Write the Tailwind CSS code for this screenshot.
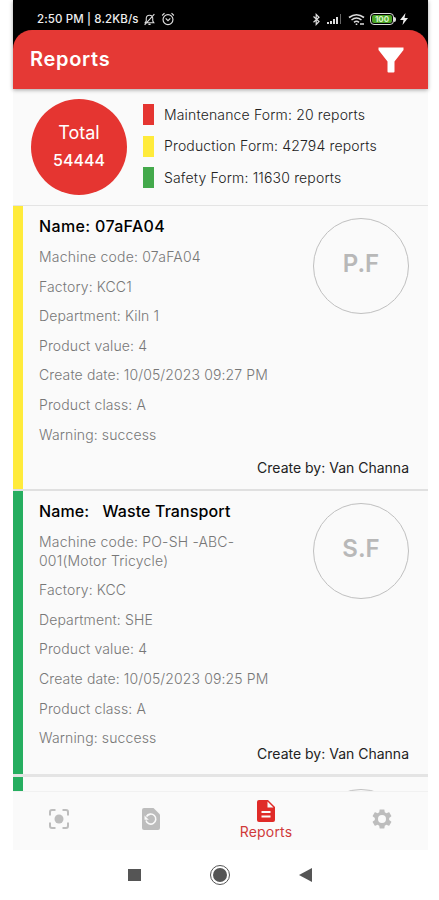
<!DOCTYPE html>
<html lang="en">
<head>
<meta charset="utf-8">
<title>Reports</title>
<script src="https://cdn.jsdelivr.net/npm/@tailwindcss/browser@4"></script>
</head>
<body class="bg-white font-['Inter','Liberation_Sans',sans-serif] w-[439px] h-[900px] overflow-hidden">
<div class="ml-[13px] w-[415px] h-[900px] flex flex-col">
  <!-- Status bar and app bar -->
  <div class="bg-black shrink-0 relative z-10 shadow-[0_1px_4px_rgba(0,0,0,0.35)]">
    <div class="h-[30px] pt-[8px] pl-[24px] pr-[20px] flex items-center justify-between text-white">
      <div class="flex items-center gap-[5px]">
        <span class="text-[11.5px] leading-[18px] font-medium tracking-[0.12px] whitespace-nowrap w-[101px] text-[#eee]">2:50 PM | 8.2KB/s</span>
        <svg class="w-[13px] h-[13px]" viewBox="0 0 24 24" fill="none" stroke="#ddd" stroke-width="2"><path d="M4 18h16l-2-3V10c0-4-2-6-6-6s-6 2-6 6v5zM10 21h4M3 22L21 2"/></svg>
        <svg class="w-[14px] h-[14px]" viewBox="0 0 24 24" fill="none" stroke="#ddd" stroke-width="2"><circle cx="12" cy="13" r="8.5"/><path d="M8 11l4 4 4-4M2 6l4-4M22 6l-4-4"/></svg>
      </div>
      <div class="flex items-center">
        <svg class="w-[9px] h-[13px] mr-[5px]" viewBox="0 0 9 13" fill="none" stroke="#ddd" stroke-width="1.2"><path d="M1.5 3.5l5.5 5-2.8 3V1.5L7 4.3l-5.5 5"/></svg>
        <svg class="w-[16px] h-[12px] mr-[6px]" viewBox="0 0 16 12" fill="#ddd"><path d="M1 9h2v2H1zM4 8h2v3H4zM7 6h2v5H7zM10 4h2v7h-2z"/><path d="M14 1h1v10h-1z" fill="#666"/></svg>
        <svg class="w-[17px] h-[13px] mr-[5px]" viewBox="0 0 17 13" fill="none" stroke="#ddd" stroke-width="1.6"><path d="M1 4.5Q8.500-1 16 4.500M3.500 7Q8.500 3 13.500 7M6 9.300q2.500-2 5 0"/><path d="M8.500 10.500v1.500M12 11h4"/></svg>
        <div class="w-[24px] h-[12px] rounded-[4px] border border-[#ddd] p-px"><div class="h-full rounded-[2px] bg-[#4ba526] text-[8px] leading-[8px] font-bold text-center text-[#d9f5c8]">100</div></div>
        <div class="w-[2px] h-[5px] bg-[#ddd] rounded-r-sm"></div>
        <svg class="w-[8px] h-[12px] ml-[4px]" viewBox="0 0 8 12" fill="#eee"><path d="M5.500 0L0 7h3.500L2.500 12 8 5H4.500z"/></svg>
      </div>
    </div>
    <div class="h-[59px] bg-[#e53935] rounded-t-[19px] flex items-center justify-between pl-[17px] pr-[24px]">
      <h1 class="text-white text-[20px] leading-[24px] font-semibold tracking-[0.7px] pb-px">Reports</h1>
      <svg class="w-[26px] h-[26px]" viewBox="0 0 26 26" fill="#fff"><path d="M.500.500h25v2.500L16.500 14.500V24.500q0 1-1 1h-5q-1 0-1-1V14.500L.500 3z"/></svg>
    </div>
  </div>

  <!-- Totals -->
  <section class="h-[117px] shrink-0 bg-[#fafafa] border-b border-[#e4e4e4] flex pl-[18px] pt-[10px]">
    <div class="w-[96px] h-[96px] rounded-full bg-[#e53531] text-white text-center pt-[20px]">
      <div class="text-[18px] leading-[28px]">Total</div>
      <div class="text-[16px] leading-[27px] font-medium">54444</div>
    </div>
    <div class="ml-[16px] pt-[5px] flex flex-col gap-[10.500px] text-[14px] text-[#222] font-light tracking-[0.16px]">
      <div class="flex items-center h-[21px]"><span class="w-[11px] h-[21px] bg-[#e53531] mr-[10px]"></span><span class="pb-px">Maintenance Form: 20 reports</span></div>
      <div class="flex items-center h-[21px]"><span class="w-[11px] h-[21px] bg-[#ffeb3b] mr-[10px]"></span><span class="pb-px">Production Form: 42794 reports</span></div>
      <div class="flex items-center h-[21px]"><span class="w-[11px] h-[21px] bg-[#43a94b] mr-[10px]"></span><span class="pb-px">Safety Form: 11630 reports</span></div>
    </div>
  </section>

  <!-- Report list -->
  <main class="h-[585px] shrink-0 overflow-hidden bg-[#fafafa]">
    <article class="h-[285px] flex border-b-2 border-[#e0e0e0]">
      <div class="w-[10px] shrink-0 bg-[#ffeb3b]"></div>
      <div class="pl-[16px] pt-[9px] w-[234px] shrink-0 flex flex-col gap-[11px] text-[14px] leading-[18.600px] font-light tracking-[0.12px] text-[#777]">
        <h2 class="text-[16px] leading-[22px] font-medium tracking-[0.35px] text-black">Name: 07aFA04</h2>
        <p class="tracking-[0.2px]">Machine code: 07aFA04</p>
        <p>Factory: KCC1</p>
        <p>Department: Kiln 1</p>
        <p>Product value: 4</p>
        <p class="whitespace-nowrap">Create date: 10/05/2023 09:27 PM</p>
        <p>Product class: A</p>
        <p>Warning: success</p>
      </div>
      <div class="flex-1 pr-[19px] pt-[12px] pb-[11px] flex flex-col items-end justify-between">
        <div class="w-[96px] h-[96px] rounded-full border border-[#c0c0c0] flex items-center justify-center pb-[5px] text-[24px] font-semibold text-[#b8b8b8]">P.F</div>
        <div class="text-[14px] leading-[20px] text-[#222] whitespace-nowrap">Create by: Van Channa</div>
      </div>
    </article>
    <article class="h-[286px] flex border-b-3 border-[#e4e4e4]">
      <div class="w-[10px] shrink-0 bg-[#26ae60]"></div>
      <div class="pl-[16px] pt-[9px] w-[234px] shrink-0 flex flex-col gap-[11px] text-[14px] leading-[18.600px] font-light tracking-[0.12px] text-[#777]">
        <h2 class="text-[16px] leading-[22px] font-medium tracking-[0.12px] text-black whitespace-pre">Name:   Waste Transport</h2>
        <p class="tracking-[0.2px]">Machine code: PO-SH -ABC-<br>001(Motor Tricycle)</p>
        <p>Factory: KCC</p>
        <p>Department: SHE</p>
        <p>Product value: 4</p>
        <p class="whitespace-nowrap">Create date: 10/05/2023 09:25 PM</p>
        <p>Product class: A</p>
        <p>Warning: success</p>
      </div>
      <div class="flex-1 pr-[19px] pt-[12px] pb-[10px] flex flex-col items-end justify-between">
        <div class="w-[96px] h-[96px] rounded-full border border-[#c0c0c0] flex items-center justify-center pb-[5px] text-[24px] font-semibold text-[#b8b8b8]">S.F</div>
        <div class="text-[14px] leading-[20px] text-[#222] whitespace-nowrap">Create by: Van Channa</div>
      </div>
    </article>
    <article class="h-[286px] flex">
      <div class="w-[10px] shrink-0 bg-[#26ae60]"></div>
      <div class="flex-1 pr-[19px] pt-[12px] flex justify-end">
        <div class="w-[96px] h-[96px] rounded-full border border-[#c0c0c0]"></div>
      </div>
    </article>
  </main>

  <!-- Tab bar -->
  <nav class="h-[59px] shrink-0 bg-[#fafafa] border-t border-[#f1f1f1] grid grid-cols-[92px_92px_138px_93px] justify-items-center">
    <svg class="w-[22px] h-[22px] mt-[16px]" viewBox="0 0 22 22" fill="none" stroke="#bdbdbd" stroke-width="2"><path d="M2 7.500V4q0-2 2-2H7.500M14.500 2H18q2 0 2 2V7.500M20 14.500V18q0 2-2 2H14.500M7.500 20H4q-2 0-2-2V14.500"/><circle cx="11" cy="11" r="4.500" fill="#bdbdbd" stroke="none"/></svg>
    <svg class="w-[18px] h-[22px] mt-[16px]" viewBox="0 0 18 22"><path d="M2 0h9.500L18 6.500V20q0 2-2 2H2q-2 0-2-2V2Q0 0 2 0z" fill="#bdbdbd"/><path d="M4.500 8.500A5 5 0 1 1 4 12.500" fill="none" stroke="#fafafa" stroke-width="1.600"/><path d="M2.500 7.500v4.300h4.300z" fill="#fafafa"/></svg>
    <div class="flex flex-col items-center pt-[8px]">
      <svg class="w-[18px] h-[22px]" viewBox="0 0 18 22"><path d="M2 0h9L18 7V20q0 2-2 2H2q-2 0-2-2V2Q0 0 2 0z" fill="#e02b28"/><path d="M10.500 1.500V7.500H16.500zM4.500 11h9v2h-9zM4.500 15.500h9v2h-9z" fill="#fafafa"/></svg>
      <span class="text-[14px] leading-[20px] tracking-[0.2px] text-[#d03a3a]">Reports</span>
    </div>
    <svg class="w-[24px] h-[24px] mt-[15px]" viewBox="0 0 24 24" fill="#bdbdbd"><path d="M19.140 12.940c.04-.3.06-.61.06-.94 0-.32-.02-.64-.07-.94l2.030-1.580c.18-.14.23-.41.12-.61l-1.920-3.320c-.12-.22-.37-.29-.59-.22l-2.390.96c-.5-.38-1.030-.7-1.620-.94l-.36-2.540c-.04-.24-.24-.41-.48-.41h-3.840c-.24 0-.43.17-.47.41l-.36 2.540c-.59.24-1.130.57-1.620.94l-2.390-.96c-.22-.08-.47 0-.59.22L2.740 8.870c-.12.21-.08.47.12.61l2.030 1.580c-.05.3-.09.63-.09.94s.02.64.07.94l-2.030 1.580c-.18.14-.23.41-.12.61l1.920 3.320c.12.22.37.29.59.22l2.390-.96c.5.38 1.030.7 1.620.94l.36 2.540c.05.24.24.41.48.41h3.840c.24 0 .44-.17.47-.41l.36-2.540c.59-.24 1.130-.56 1.620-.94l2.390.96c.22.08.47 0 .59-.22l1.920-3.320c.12-.22.07-.47-.12-.61zM12 16a4 4 0 1 1 0-8 4 4 0 0 1 0 8z"/></svg>
  </nav>

  <!-- System navigation -->
  <div class="h-[50px] shrink-0 bg-white flex items-center justify-between pl-[115px] pr-[116px]">
    <div class="w-[13px] h-[12px] bg-[#555]"></div>
    <div class="w-[20px] h-[20px] rounded-full border-[1.500px] border-[#555] p-[2px] flex"><div class="flex-1 rounded-full bg-[#555]"></div></div>
    <svg class="w-[13px] h-[14px]" viewBox="0 0 13 14" fill="#555"><path d="M0 7L13 0v14z"/></svg>
  </div>
</div>
</body>
</html>
